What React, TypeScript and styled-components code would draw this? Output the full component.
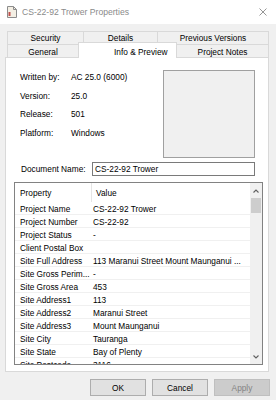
import React from 'react';
import styled, { createGlobalStyle } from 'styled-components';

const GlobalStyle = createGlobalStyle`
  html, body {
    margin: 0;
    padding: 0;
    background: #f0f0f0;
  }
  body {
    font-family: "Liberation Sans", Arial, sans-serif;
  }
`;

const Window = styled.div`
  width: 276px;
  height: 400px;
  overflow: hidden;
  background: #f0f0f0;
  font-family: "Liberation Sans", Arial, sans-serif;
  font-size: 8.3px;
  color: #000;
  display: flex;
  flex-direction: column;
`;

const TitleBar = styled.div`
  flex: none;
  height: 24px;
  background: #fff;
  display: flex;
  align-items: center;
  padding: 0 9px 0 7px;
`;

const TitleText = styled.span`
  flex: 1;
  margin-left: 5px;
  font-size: 8.6px;
  color: #8a8a8a;
  white-space: nowrap;
`;

const Body = styled.div`
  padding: 7px 7px 0 5px;
  display: flex;
  flex-direction: column;
`;

const TabStrip = styled.div`
  margin-left: 2px;
  display: flex;
  flex-direction: column;
`;

const TabRow = styled.div<{ $back?: boolean }>`
  display: flex;
  height: ${(p) => (p.$back ? 14 : 13)}px;
  margin-top: ${(p) => (p.$back ? 0 : -1)}px;
`;

const Tab = styled.div<{ $w: number; $first?: boolean; $front?: boolean; $active?: boolean; $padLeft?: number }>`
  box-sizing: border-box;
  flex: none;
  width: ${(p) => p.$w}px;
  height: ${(p) => (p.$active ? 16 : p.$front ? 13 : 14)}px;
  margin-left: ${(p) => (p.$first ? 0 : -1)}px;
  margin-top: ${(p) => (p.$active ? -2 : 0)}px;
  border: 1px solid #d9d9d9;
  border-bottom: ${(p) => (p.$front ? 'none' : '1px solid #d9d9d9')};
  background: ${(p) => (p.$active ? '#fff' : '#f0f0f0')};
  position: relative;
  z-index: ${(p) => (p.$active ? 2 : 0)};
  display: flex;
  align-items: center;
  justify-content: ${(p) => (p.$padLeft ? 'flex-start' : 'center')};
  padding-left: ${(p) => p.$padLeft ?? 0}px;
  padding-top: ${(p) => (p.$front ? 2 : 0)}px;
  white-space: nowrap;
`;

const Panel = styled.div`
  box-sizing: border-box;
  width: 264px;
  height: 315px;
  background: #fff;
  border: 1px solid #d9d9d9;
  padding: 12px 0 0 8px;
  display: flex;
  flex-direction: column;
`;

const TopSection = styled.div`
  display: flex;
`;

const InfoGrid = styled.div`
  width: 143px;
  margin-top: -2px;
  padding-left: 6px;
  display: grid;
  grid-template-columns: 51px 1fr;
  grid-auto-rows: 18.5px;
  align-items: center;
  align-content: start;
  white-space: nowrap;
`;

const PreviewBox = styled.div`
  box-sizing: border-box;
  width: 92px;
  height: 88px;
  background: #f0f0f0;
  border: 1px solid #a0a0a0;
`;

const FieldRow = styled.div`
  display: flex;
  align-items: center;
  margin-top: 4px;
`;

const FieldLabel = styled.div`
  width: 78px;
  box-sizing: border-box;
  padding-left: 7px;
  white-space: nowrap;
`;

const TextField = styled.div`
  box-sizing: border-box;
  width: 163px;
  height: 14px;
  border: 1px solid #7a7a7a;
  padding-left: 2px;
  display: flex;
  align-items: center;
  background: #fff;
`;

const ListView = styled.div`
  box-sizing: border-box;
  width: 249px;
  height: 183px;
  margin-top: 6px;
  border: 1px solid #828282;
  display: flex;
  overflow: hidden;
`;

const ListContent = styled.div`
  flex: 1;
  overflow: hidden;
`;

const HeaderRow = styled.div`
  display: flex;
  height: 19px;
  align-items: stretch;
`;

const HeaderCell = styled.div<{ $w?: number; $pad: number }>`
  box-sizing: border-box;
  ${(p) => (p.$w ? `width: ${p.$w}px; border-right: 1px solid #e5e5e5;` : 'flex: 1;')}
  padding-left: ${(p) => p.$pad}px;
  display: flex;
  align-items: center;
`;

const Row = styled.div`
  box-sizing: border-box;
  display: flex;
  height: 13px;
  align-items: center;
  border-bottom: 1px solid #f0f0f0;
  white-space: nowrap;
`;

const Cell = styled.div<{ $w?: number; $pad: number }>`
  box-sizing: border-box;
  ${(p) => (p.$w ? `width: ${p.$w}px;` : 'flex: 1;')}
  padding-left: ${(p) => p.$pad}px;
  overflow: hidden;
  padding-top: 1px;
`;

const ScrollBar = styled.div`
  flex: none;
  width: 12px;
  background: #f0f0f0;
  display: flex;
  flex-direction: column;
`;

const ScrollButton = styled.div`
  height: 15px;
  display: flex;
  align-items: center;
  justify-content: center;
`;

const ScrollThumb = styled.div`
  height: 15px;
  margin: 0 1px;
  background: #cdcdcd;
`;

const ScrollTrack = styled.div`
  flex: 1;
`;

const ButtonRow = styled.div`
  display: flex;
  justify-content: flex-end;
  gap: 6px;
  margin-top: 7px;
  margin-right: -1px;
`;

const Button = styled.div<{ $disabled?: boolean }>`
  box-sizing: border-box;
  width: 56px;
  height: 17px;
  display: flex;
  align-items: center;
  justify-content: center;
  background: ${(p) => (p.$disabled ? '#cccccc' : '#e1e1e1')};
  border: 1px solid ${(p) => (p.$disabled ? '#bfbfbf' : '#adadad')};
  color: ${(p) => (p.$disabled ? '#838383' : '#000')};
`;

const DocIcon = () => (
  <svg width="10" height="12" viewBox="0 0 10 12">
    <path d="M0.5 0.5 H6.5 L9.5 3.5 V11.5 H0.5 Z" fill="#f4efe4" stroke="#8c8c8c" strokeWidth="1" />
    <path d="M6.5 0.5 V3.5 H9.5" fill="none" stroke="#8c8c8c" strokeWidth="1" />
    <rect x="1.5" y="6" width="2" height="4" fill="#c0504d" />
  </svg>
);

const CloseIcon = () => (
  <svg width="8" height="8" viewBox="0 0 8 8">
    <path d="M0.5 0.5 L7.5 7.5 M7.5 0.5 L0.5 7.5" stroke="#8a8a8a" strokeWidth="0.9" />
  </svg>
);

const Chevron = ({ up }: { up?: boolean }) => (
  <svg width="6" height="4" viewBox="0 0 6 4">
    <path d={up ? 'M0.5 3.5 L3 1 L5.5 3.5' : 'M0.5 0.5 L3 3 L5.5 0.5'} fill="none" stroke="#606060" strokeWidth="1.1" />
  </svg>
);

const info = [
  ['Written by:', 'AC 25.0 (6000)'],
  ['Version:', '25.0'],
  ['Release:', '501'],
  ['Platform:', 'Windows'],
];

const properties = [
  ['Project Name', 'CS-22-92 Trower'],
  ['Project Number', 'CS-22-92'],
  ['Project Status', '-'],
  ['Client Postal Box', ''],
  ['Site Full Address', '113 Maranui Street Mount Maunganui ...'],
  ['Site Gross Perim...', '-'],
  ['Site Gross Area', '453'],
  ['Site Address1', '113'],
  ['Site Address2', 'Maranui Street'],
  ['Site Address3', 'Mount Maunganui'],
  ['Site City', 'Tauranga'],
  ['Site State', 'Bay of Plenty'],
  ['Site Postcode', '3116'],
];

export default function App() {
  return (
    <Window>
      <GlobalStyle />
      <TitleBar>
        <DocIcon />
        <TitleText>CS-22-92 Trower Properties</TitleText>
        <CloseIcon />
      </TitleBar>
      <Body>
        <TabStrip>
          <TabRow $back>
            <Tab $w={77} $first>Security</Tab>
            <Tab $w={75}>Details</Tab>
            <Tab $w={112}>Previous Versions</Tab>
          </TabRow>
          <TabRow>
            <Tab $w={72} $first $front>General</Tab>
            <Tab $w={99} $front $active $padLeft={35}>Info &amp; Preview</Tab>
            <Tab $w={93} $front>Project Notes</Tab>
          </TabRow>
        </TabStrip>
        <Panel>
          <TopSection>
            <InfoGrid>
              {info.map(([k, v]) => (
                <React.Fragment key={k}>
                  <span>{k}</span>
                  <span>{v}</span>
                </React.Fragment>
              ))}
            </InfoGrid>
            <PreviewBox />
          </TopSection>
          <FieldRow>
            <FieldLabel>Document Name:</FieldLabel>
            <TextField>CS-22-92 Trower</TextField>
          </FieldRow>
          <ListView>
            <ListContent>
              <HeaderRow>
                <HeaderCell $w={77} $pad={5}>Property</HeaderCell>
                <HeaderCell $pad={4}>Value</HeaderCell>
              </HeaderRow>
              {properties.map(([k, v]) => (
                <Row key={k}>
                  <Cell $w={77} $pad={5}>{k}</Cell>
                  <Cell $pad={1}>{v}</Cell>
                </Row>
              ))}
            </ListContent>
            <ScrollBar>
              <ScrollButton><Chevron up /></ScrollButton>
              <ScrollThumb />
              <ScrollTrack />
              <ScrollButton><Chevron /></ScrollButton>
            </ScrollBar>
          </ListView>
        </Panel>
        <ButtonRow>
          <Button>OK</Button>
          <Button>Cancel</Button>
          <Button $disabled>Apply</Button>
        </ButtonRow>
      </Body>
    </Window>
  );
}
